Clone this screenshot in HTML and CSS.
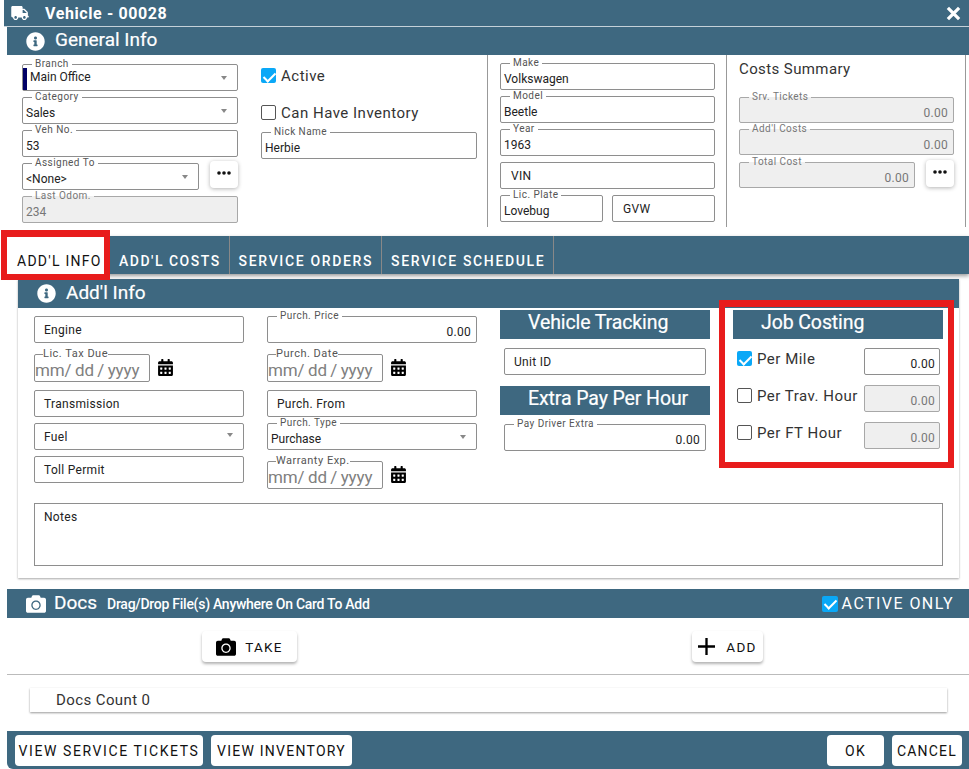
FILE: index.html
```html
<!DOCTYPE html>
<html lang="en">
<head>
    <meta charset="UTF-8">
    <meta name="viewport" content="width=device-width, initial-scale=1.0">
    <title>Vehicle - 00028</title>
    <link rel="stylesheet" href="styles.css">
</head>
<body>
    <svg class="sprites" aria-hidden="true">
        <symbol id="i-truck" viewBox="0 0 640 512"><path d="M624 352h-16V243.9c0-12.7-5.1-24.9-14.1-33.9L494 110.1c-9-9-21.2-14.1-33.9-14.1H416V48c0-26.5-21.5-48-48-48H48C21.5 0 0 21.5 0 48v320c0 26.5 21.5 48 48 48h16c0 53 43 96 96 96s96-43 96-96h128c0 53 43 96 96 96s96-43 96-96h48c8.8 0 16-7.2 16-16v-32c0-8.8-7.2-16-16-16zM160 464c-26.5 0-48-21.5-48-48s21.5-48 48-48 48 21.5 48 48-21.5 48-48 48zm320 0c-26.5 0-48-21.5-48-48s21.5-48 48-48 48 21.5 48 48-21.5 48-48 48zm80-208H416V144h44.1l99.9 99.9V256z"/></symbol>
        <symbol id="i-info" viewBox="0 0 512 512"><path d="M256 8C119.043 8 8 119.083 8 256c0 136.997 111.043 248 248 248s248-111.003 248-248C504 119.083 392.957 8 256 8zm0 110c23.196 0 42 18.804 42 42s-18.804 42-42 42-42-18.804-42-42 18.804-42 42-42zm56 254c0 6.627-5.373 12-12 12h-88c-6.627 0-12-5.373-12-12v-24c0-6.627 5.373-12 12-12h12v-64h-12c-6.627 0-12-5.373-12-12v-24c0-6.627 5.373-12 12-12h64c6.627 0 12 5.373 12 12v100h12c6.627 0 12 5.373 12 12v24z"/></symbol>
        <symbol id="i-camera" viewBox="0 0 512 512"><path d="M512 144v288c0 26.5-21.5 48-48 48H48c-26.5 0-48-21.5-48-48V144c0-26.5 21.5-48 48-48h88l12.3-32.9c7-18.7 24.9-31.1 44.9-31.1h125.5c20 0 37.9 12.4 44.9 31.1L376 96h88c26.5 0 48 21.5 48 48zM376 288c0-66.2-53.8-120-120-120s-120 53.8-120 120 53.8 120 120 120 120-53.8 120-120zm-32 0c0 48.5-39.5 88-88 88s-88-39.5-88-88 39.5-88 88-88 88 39.5 88 88z"/></symbol>
        <symbol id="i-calendar" viewBox="0 0 448 512"><path d="M0 464c0 26.5 21.5 48 48 48h352c26.5 0 48-21.5 48-48V192H0v272zm320-196c0-6.6 5.4-12 12-12h40c6.6 0 12 5.4 12 12v40c0 6.6-5.4 12-12 12h-40c-6.6 0-12-5.4-12-12v-40zm0 128c0-6.6 5.4-12 12-12h40c6.6 0 12 5.4 12 12v40c0 6.6-5.4 12-12 12h-40c-6.6 0-12-5.4-12-12v-40zM192 268c0-6.6 5.4-12 12-12h40c6.6 0 12 5.4 12 12v40c0 6.6-5.4 12-12 12h-40c-6.6 0-12-5.4-12-12v-40zm0 128c0-6.6 5.4-12 12-12h40c6.6 0 12 5.4 12 12v40c0 6.6-5.4 12-12 12h-40c-6.6 0-12-5.4-12-12v-40zM64 268c0-6.6 5.4-12 12-12h40c6.6 0 12 5.4 12 12v40c0 6.6-5.4 12-12 12H76c-6.6 0-12-5.4-12-12v-40zm0 128c0-6.6 5.4-12 12-12h40c6.6 0 12 5.4 12 12v40c0 6.6-5.4 12-12 12H76c-6.6 0-12-5.4-12-12v-40zM400 64h-48V16c0-8.8-7.2-16-16-16h-32c-8.8 0-16 7.2-16 16v48H160V16c0-8.8-7.2-16-16-16h-32c-8.8 0-16 7.2-16 16v48H48C21.5 64 0 85.5 0 112v48h448v-48c0-26.5-21.5-48-48-48z"/></symbol>
        <symbol id="i-dots" viewBox="0 0 14 4"><circle cx="2" cy="2" r="1.8"/><circle cx="7" cy="2" r="1.8"/><circle cx="12" cy="2" r="1.8"/></symbol>
    </svg>

    <div class="dialog">
        <header class="title-bar">
            <svg class="icon-truck"><use href="#i-truck"/></svg>
            <span class="title-text">Vehicle - 00028</span>
            <svg class="icon-close" viewBox="0 0 12 12"><path d="M1.5 1.5l9 9M10.5 1.5l-9 9"/></svg>
        </header>

        <div class="section-bar general-bar">
            <svg class="icon-info"><use href="#i-info"/></svg>
            <span>General Info</span>
        </div>

        <section class="general">
            <div class="general-left">
                <div class="stack">
                    <fieldset class="field field-branch"><legend>Branch</legend><div class="val"><span class="branch-mark"></span><span class="branch-name">Main Office</span><i class="arrow"></i></div></fieldset>
                    <fieldset class="field"><legend>Category</legend><div class="val"><span>Sales</span><i class="arrow"></i></div></fieldset>
                    <fieldset class="field"><legend>Veh No.</legend><div class="val">53</div></fieldset>
                    <div class="with-button">
                        <fieldset class="field"><legend>Assigned To</legend><div class="val"><span>&lt;None&gt;</span><i class="arrow"></i></div></fieldset>
                        <button class="dots-btn"><svg class="icon-dots"><use href="#i-dots"/></svg></button>
                    </div>
                    <fieldset class="field disabled"><legend>Last Odom.</legend><div class="val">234</div></fieldset>
                </div>
                <div class="stack">
                    <label class="check check-active"><input type="checkbox" checked>Active</label>
                    <label class="check check-inventory"><input type="checkbox">Can Have Inventory</label>
                    <fieldset class="field nick"><legend>Nick Name</legend><div class="val">Herbie</div></fieldset>
                </div>
            </div>

            <div class="general-col vehicle-col">
                <fieldset class="field"><legend>Make</legend><div class="val">Volkswagen</div></fieldset>
                <fieldset class="field"><legend>Model</legend><div class="val">Beetle</div></fieldset>
                <fieldset class="field"><legend>Year</legend><div class="val">1963</div></fieldset>
                <div class="field plain">VIN</div>
                <div class="plate-row">
                    <fieldset class="field"><legend>Lic. Plate</legend><div class="val">Lovebug</div></fieldset>
                    <div class="field plain">GVW</div>
                </div>
            </div>

            <div class="general-col costs-col">
                <div class="costs-title">Costs Summary</div>
                <fieldset class="field disabled cost"><legend>Srv. Tickets</legend><div class="val num">0.00</div></fieldset>
                <fieldset class="field disabled cost"><legend>Add'l Costs</legend><div class="val num">0.00</div></fieldset>
                <div class="with-button total-row">
                    <fieldset class="field disabled cost"><legend>Total Cost</legend><div class="val num">0.00</div></fieldset>
                    <button class="dots-btn"><svg class="icon-dots"><use href="#i-dots"/></svg></button>
                </div>
            </div>
        </section>

        <nav class="tabs">
            <a class="tab active">ADD'L INFO</a>
            <a class="tab">ADD'L COSTS</a>
            <a class="tab tab-long">SERVICE ORDERS</a>
            <a class="tab tab-long">SERVICE SCHEDULE</a>
        </nav>

        <section class="card">
            <div class="section-bar card-bar">
                <svg class="icon-info"><use href="#i-info"/></svg>
                <span>Add'l Info</span>
            </div>
            <div class="card-grid">
                <div class="stack col-fields">
                    <div class="field plain">Engine</div>
                    <div class="date-row">
                        <fieldset class="field date"><legend>Lic. Tax Due</legend><div class="val">mm/ dd / yyyy</div></fieldset>
                        <svg class="icon-calendar"><use href="#i-calendar"/></svg>
                    </div>
                    <div class="field plain">Transmission</div>
                    <div class="field plain">Fuel<i class="arrow"></i></div>
                    <div class="field plain">Toll Permit</div>
                </div>
                <div class="stack col-fields">
                    <fieldset class="field"><legend>Purch. Price</legend><div class="val num">0.00</div></fieldset>
                    <div class="date-row">
                        <fieldset class="field date"><legend>Purch. Date</legend><div class="val">mm/ dd / yyyy</div></fieldset>
                        <svg class="icon-calendar"><use href="#i-calendar"/></svg>
                    </div>
                    <div class="field plain">Purch. From</div>
                    <fieldset class="field"><legend>Purch. Type</legend><div class="val"><span>Purchase</span><i class="arrow"></i></div></fieldset>
                    <div class="date-row">
                        <fieldset class="field date"><legend>Warranty Exp.</legend><div class="val">mm/ dd / yyyy</div></fieldset>
                        <svg class="icon-calendar"><use href="#i-calendar"/></svg>
                    </div>
                </div>
                <div class="stack col-boxed">
                    <h3 class="sub-head">Vehicle Tracking</h3>
                    <div class="field plain">Unit ID</div>
                    <h3 class="sub-head sub-head-next">Extra Pay Per Hour</h3>
                    <fieldset class="field"><legend>Pay Driver Extra</legend><div class="val num">0.00</div></fieldset>
                </div>
                <div class="stack">
                    <h3 class="sub-head sub-head-job">Job Costing</h3>
                    <div class="cost-rows">
                        <div class="cost-row">
                            <label class="check"><input type="checkbox" checked>Per Mile</label>
                            <div class="field plain num-box">0.00</div>
                        </div>
                        <div class="cost-row">
                            <label class="check"><input type="checkbox">Per Trav. Hour</label>
                            <div class="field plain num-box disabled">0.00</div>
                        </div>
                        <div class="cost-row">
                            <label class="check"><input type="checkbox">Per FT Hour</label>
                            <div class="field plain num-box disabled">0.00</div>
                        </div>
                    </div>
                </div>
            </div>
            <div class="notes">Notes</div>
        </section>

        <div class="section-bar docs-bar">
            <svg class="icon-camera"><use href="#i-camera"/></svg>
            <span>Docs</span>
            <small>Drag/Drop File(s) Anywhere On Card To Add</small>
            <label class="check active-only"><input type="checkbox" checked>ACTIVE ONLY</label>
        </div>

        <div class="doc-actions">
            <button class="btn btn-take"><svg class="icon-camera-btn"><use href="#i-camera"/></svg>TAKE</button>
            <button class="btn btn-add"><svg class="icon-plus" viewBox="0 0 16 16"><path d="M8 0v16M0 8h16"/></svg>ADD</button>
        </div>

        <div class="docs-count">Docs Count 0</div>

        <footer class="footer">
            <button class="btn btn-tickets">VIEW SERVICE TICKETS</button>
            <button class="btn btn-inventory">VIEW INVENTORY</button>
            <button class="btn btn-ok">OK</button>
            <button class="btn btn-cancel">CANCEL</button>
        </footer>
    </div>

    <div class="callout callout-tab"></div>
    <div class="callout callout-job"></div>
</body>
</html>
```

FILE: styles.css
```css
* {
    box-sizing: border-box;
}

html, body {
    margin: 0;
    height: 769px;
    overflow: hidden;
}

body {
    position: relative;
    background-color: #fff;
    font-family: Roboto, Arial, sans-serif;
    color: #222;
}

.sprites {
    display: none;
}

.dialog {
    margin-left: 7px;
    width: 962px;
}

/* header bars */

.title-bar {
    display: flex;
    align-items: center;
    height: 27px;
    margin-left: -3px;
    padding: 0 0 0 7px;
    background-color: #3e6880;
    border-bottom: 1px solid #c5d1d9;
    color: #fff;
}

.icon-truck {
    width: 18px;
    height: 14px;
    fill: #fff;
}

.title-text {
    margin-left: 16px;
    font-size: 16px;
    font-weight: 700;
    letter-spacing: 0.6px;
}

.icon-close {
    width: 15px;
    height: 15px;
    margin-left: auto;
    margin-right: 8px;
    fill: none;
    stroke: #fff;
    stroke-width: 2.6;
}

.section-bar {
    display: flex;
    align-items: center;
    background-color: #3e6880;
    color: #fff;
    font-size: 19px;
    -webkit-text-stroke: 0.2px #fff;
}

.section-bar > span {
    margin-bottom: 3px;
}

.general-bar {
    height: 28px;
    padding-left: 19px;
}

.icon-info {
    width: 19px;
    height: 19px;
    margin-right: 10px;
    fill: #fff;
}

/* general info */

.general {
    display: grid;
    grid-template-columns: 481px 239px 239px;
    height: 172px;
}

.general-left {
    display: grid;
    grid-template-columns: 216px 216px;
    column-gap: 23px;
    padding: 4px 0 0 15px;
    border-right: 1px solid #999;
}

.general-col {
    display: flex;
    flex-direction: column;
    gap: 1px;
    padding: 3px 11px 0 12px;
    border-right: 1px solid #999;
}

.stack {
    display: flex;
    flex-direction: column;
    gap: 1px;
}

.field {
    min-width: 0;
    height: 32px;
    margin: 0;
    padding: 0 3px;
    border: 1px solid #8e8e8e;
    border-radius: 2px;
    background-color: #fff;
    font-size: 12px;
    color: #222;
}

.field legend {
    margin-left: 6px;
    padding: 0 3px;
    font-size: 10px;
    line-height: 10px;
    letter-spacing: 0.45px;
    color: #555;
}

.val {
    display: flex;
    align-items: center;
    height: 21px;
}

.plain {
    display: flex;
    align-items: center;
    height: 27px;
    margin-top: 5px;
    padding-left: 9px;
    letter-spacing: 0.3px;
}

.vehicle-col .plain {
    padding-left: 10px;
}

.disabled {
    background-color: #efefef;
    border-color: #a8a8a8;
    color: #777;
}

.disabled legend {
    color: #777;
}

.num {
    justify-content: flex-end;
    padding-right: 2px;
    letter-spacing: 0.3px;
}

.arrow {
    width: 0;
    height: 0;
    margin: 0 7px 3px auto;
    border-left: 3.5px solid transparent;
    border-right: 3.5px solid transparent;
    border-top: 4px solid #888;
}

.field-branch {
    padding-left: 0;
}

.field-branch legend {
    margin-left: 9px;
}

.branch-mark {
    align-self: stretch;
    width: 4px;
    margin: -1px 3px 0 0;
    background-color: #000066;
}

.branch-name {
    margin-bottom: 5px;
}

.with-button {
    display: flex;
    gap: 11px;
}

.with-button .field {
    flex: 1;
}

.dots-btn {
    flex: none;
    width: 28px;
    height: 27px;
    margin-top: 3px;
    padding: 0;
    border: none;
    border-radius: 4px;
    background-color: #fff;
    box-shadow: 0 1px 4px rgba(0, 0, 0, 0.3);
}

.icon-dots {
    display: block;
    width: 14px;
    height: 4px;
    margin: 0 auto 4px;
    fill: #111;
}

.check {
    display: flex;
    align-items: center;
    height: 15px;
    font-size: 15px;
    letter-spacing: 0.5px;
    color: #333;
}

.check input {
    flex: none;
    position: relative;
    width: 15px;
    height: 15px;
    margin: 0 5px 0 0;
    border: 1px solid #555;
    border-radius: 2px;
    background-color: #fff;
    appearance: none;
}

.check input:checked {
    border: none;
    background-color: #0aa8f7;
}

.check input:checked::after {
    content: "";
    position: absolute;
    left: 5px;
    top: 1.5px;
    width: 5px;
    height: 10px;
    border-right: 2px solid #fff;
    border-bottom: 2px solid #fff;
    transform: rotate(45deg);
}

.check-active {
    margin-top: 9px;
}

.check-inventory {
    margin-top: 21px;
}

.nick {
    margin-top: 6px;
}

.plate-row {
    display: grid;
    grid-template-columns: 103px 103px;
    column-gap: 9px;
}

.costs-col {
    padding-top: 4px;
}

.costs-title {
    height: 18px;
    margin: 1px 0 13px;
    font-size: 15px;
    letter-spacing: 0.4px;
    line-height: 18px;
    color: #333;
}

.cost {
    height: 31px;
}

.total-row {
    margin-top: 1px;
}

/* tabs */

.tabs {
    display: flex;
    height: 38px;
    margin-top: 9px;
    background-color: #3e6880;
    box-shadow: 0 2px 4px rgba(0, 0, 0, 0.4);
}

.tab {
    padding: 17px 8px 0 9px;
    border-right: 1px solid #888;
    font-size: 14px;
    font-weight: 500;
    letter-spacing: 1.5px;
    line-height: 17px;
    color: #fff;
}

.tab-long {
    letter-spacing: 1.65px;
}

.tab.active {
    width: 103px;
    padding-left: 10px;
    padding-right: 0;
    background-color: #fff;
    border-right: none;
    font-weight: 400;
    letter-spacing: 1.25px;
    color: #111;
}

/* add'l info card */

.card {
    width: 941px;
    height: 299px;
    margin: 5px 0 0 11px;
    box-shadow: 0 1px 2px rgba(0, 0, 0, 0.35);
}

.card-bar {
    height: 29px;
    padding-left: 19px;
}

.card-grid {
    display: grid;
    grid-template-columns: repeat(4, 210px);
    column-gap: 23px;
    padding: 2px 0 0 16px;
}

.col-fields {
    padding-top: 1px;
}

.date-row {
    display: flex;
    align-items: flex-end;
    gap: 8px;
    margin: 5px 0 2px;
}

.date {
    width: 116px;
    height: 33px;
    padding: 0;
    font-size: 17px;
    letter-spacing: -0.1px;
    word-spacing: -0.7px;
    color: #808080;
}

.date legend {
    margin-left: 8px;
    padding: 0;
    font-size: 11px;
    letter-spacing: 0.5px;
    word-spacing: 0;
}

.icon-calendar {
    width: 15px;
    height: 17px;
    margin-bottom: 6px;
    fill: #000;
}

.col-boxed {
    padding: 0 4px;
}

.sub-head {
    height: 29px;
    margin: 0 -4px 3px;
    padding-left: 28px;
    background-color: #3e6880;
    color: #fff;
    font-size: 19.5px;
    font-weight: 400;
    letter-spacing: -0.1px;
    line-height: 25px;
    -webkit-text-stroke: 0.2px #fff;
}

.sub-head-next {
    margin-top: 10px;
}

.sub-head-job {
    margin: 0;
}

.cost-rows {
    display: flex;
    flex-direction: column;
    gap: 10px;
    margin: 8px 3px 0 4px;
}

.cost-row {
    display: flex;
    justify-content: space-between;
}

.cost-row .check {
    margin-top: 3px;
}

.num-box {
    justify-content: flex-end;
    width: 76px;
    margin-top: 0;
    padding: 4px 4px 0 0;
}

.notes {
    height: 63px;
    margin: 12px 16px 0 16px;
    padding: 6px 9px;
    border: 1px solid #8e8e8e;
    font-size: 12px;
    letter-spacing: 0.3px;
}

/* docs */

.docs-bar {
    height: 29px;
    margin-top: 11px;
    padding: 0 15px 0 19px;
}

.icon-camera {
    width: 20px;
    height: 20px;
    margin-right: 8px;
    fill: #fff;
}

.docs-bar small {
    margin-left: 10px;
    font-size: 14px;
    font-weight: 500;
    letter-spacing: -0.27px;
    -webkit-text-stroke: 0;
}

.active-only {
    margin-left: auto;
    font-size: 16px;
    letter-spacing: 1.45px;
    color: #fff;
    -webkit-text-stroke: 0;
}

.active-only input {
    width: 16px;
    height: 16px;
    margin-right: 4px;
}

.doc-actions {
    display: grid;
    grid-template-columns: 1fr 1fr;
    justify-items: center;
    align-items: start;
    height: 57px;
    padding-top: 13px;
    border-bottom: 1px solid #bbb;
}

.btn {
    display: flex;
    align-items: center;
    justify-content: center;
    height: 31px;
    padding: 0;
    border: none;
    border-radius: 4px;
    background-color: #fff;
    font-family: inherit;
    font-size: 14px;
    letter-spacing: 1.25px;
    color: #111;
    flex: none;
}

.doc-actions .btn {
    box-shadow: 0 2px 3px rgba(0, 0, 0, 0.3);
    font-size: 13.5px;
}

.btn-take {
    width: 95px;
    margin-left: 4px;
}

.btn-add {
    width: 71px;
    margin-right: 2px;
}

.icon-camera-btn {
    width: 20px;
    height: 20px;
    margin-right: 9px;
    fill: #000;
}

.icon-plus {
    width: 17px;
    height: 17px;
    margin-right: 11px;
    fill: none;
    stroke: #000;
    stroke-width: 2.2;
}

.docs-count {
    height: 24px;
    margin: 13px 22px 0 23px;
    padding-left: 26px;
    font-size: 15px;
    letter-spacing: 0.4px;
    line-height: 25px;
    color: #333;
    box-shadow: 0 1px 2px rgba(0, 0, 0, 0.4);
}

.footer {
    display: flex;
    gap: 8px;
    height: 38px;
    margin-top: 19px;
    padding: 4px 7px 0 8px;
    background-color: #3e6880;
    border-bottom-left-radius: 6px;
}

.btn-tickets {
    width: 188px;
    letter-spacing: 1.6px;
}

.btn-inventory {
    width: 141px;
}

.btn-ok {
    width: 57px;
    margin-left: auto;
}

.btn-cancel {
    width: 70px;
    letter-spacing: 1.2px;
}

/* red annotation boxes over the screenshot */

.callout {
    position: absolute;
    border: 6px solid #e81c1c;
}

.callout-tab {
    left: 1px;
    top: 230px;
    width: 109px;
    height: 50px;
    border-top-width: 7px;
}

.callout-job {
    left: 719px;
    top: 300px;
    width: 235px;
    height: 168px;
    border-top-width: 7px;
}
```
